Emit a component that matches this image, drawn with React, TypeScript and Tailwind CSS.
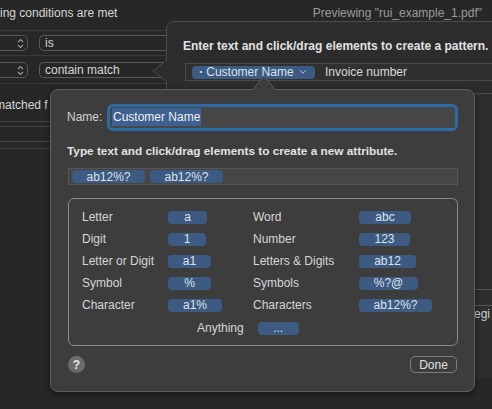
import { ChevronDown } from "lucide-react";

const LEFT_ROWS = [
  { label: "Letter", token: "a", w: "w-[39px]" },
  { label: "Digit", token: "1", w: "w-[38px]" },
  { label: "Letter or Digit", token: "a1", w: "w-[43px]" },
  { label: "Symbol", token: "%", w: "w-[43px]" },
  { label: "Character", token: "a1%", w: "w-[54px]" },
];

const RIGHT_ROWS = [
  { label: "Word", token: "abc", w: "w-[52px]" },
  { label: "Number", token: "123", w: "w-[51px]" },
  { label: "Letters & Digits", token: "ab12", w: "w-[57px]" },
  { label: "Symbols", token: "%?@", w: "w-[59px]" },
  { label: "Characters", token: "ab12%?", w: "w-[73px]" },
];

function Token({ children, w }: { children: React.ReactNode; w: string }) {
  return (
    <span
      className={`inline-flex h-[13px] items-center justify-center rounded-[4px] bg-[#3c5a82] text-[12px] leading-none text-[#dde3ea] ${w}`}
    >
      {children}
    </span>
  );
}

function UpDown() {
  return (
    <svg width="7" height="11" viewBox="0 0 7 11" className="text-[#9a9a9a]">
      <path d="M1 4 L3.5 1.5 L6 4 M1 7 L3.5 9.5 L6 7" fill="none" stroke="currentColor" strokeWidth="1.1" />
    </svg>
  );
}

export default function App() {
  return (
    <div className="relative h-[409px] w-[492px] overflow-hidden bg-[#272727] font-['Liberation_Sans',Arial,sans-serif] text-[12px] text-[#d6d6d6]">
      {/* Background window */}
      <div className="flex h-full">
        <div className="flex w-[166px] flex-col">
          <div className="flex h-[26px] items-center whitespace-nowrap">ing conditions are met</div>
          <div className="mt-[4px] border-t border-[#3a3a3a]" />
          <div className="mt-[4px] flex h-[16px] gap-[11px]">
            <div className="-ml-[10px] flex w-[38px] items-center justify-end rounded-[5px] border border-[#5a5a5a] pr-[3px]">
              <UpDown />
            </div>
            <div className="flex flex-1 items-center rounded-l-[5px] border border-r-0 border-[#5a5a5a] pl-[5px]">is</div>
          </div>
          <div className="mt-[4px] border-t border-[#3a3a3a]" />
          <div className="mt-[6px] flex h-[16px] gap-[11px]">
            <div className="-ml-[10px] flex w-[38px] items-center justify-end rounded-[5px] border border-[#5a5a5a] pr-[3px]">
              <UpDown />
            </div>
            <div className="flex flex-1 items-center rounded-l-[5px] border border-r-0 border-[#5a5a5a] pl-[5px]">contain match</div>
          </div>
          <div className="mt-[5px] border-t border-[#3a3a3a]" />
          <div className="-ml-[5px] mt-[12px] whitespace-nowrap">matched f</div>
          <div className="mt-[7px] border-t border-[#444]" />
          <div className="mt-[4px] border-t border-[#444]" />
          <div className="mt-[14px] border-t border-[#444]" />
          <div className="mt-[6px] border-t border-[#444]" />
        </div>
        <div className="flex flex-1 flex-col">
          <div className="flex h-[26px] items-center justify-end pr-[10px] text-[#9b9b9b]">
            Previewing "rui_example_1.pdf"
          </div>
          <div className="ml-auto mt-[67px] flex h-[285px] w-[20px] flex-col border-t border-[#555] bg-[#2e2e2e]">
            <div className="mt-[195px] border-t border-[#555]" />
            <div className="mt-[15px] flex h-[16px] items-center border-t border-[#555] pl-[2px] text-[#d0d0d0]">egi</div>
          </div>
        </div>
      </div>

      {/* Pattern popover */}
      <div className="absolute left-[166px] top-[21px] h-[73px] w-[340px] rounded-tl-[8px] border border-[#4c4c4c] bg-[#2c2c2c] pl-[16px] pt-[16px]">
        <svg className="absolute -left-[15px] top-[38px]" width="16" height="22" viewBox="0 0 16 22">
          <path d="M15 0 L1 11 L15 22" fill="#2c2c2c" stroke="#4c4c4c" strokeWidth="1" />
        </svg>
        <div className="whitespace-nowrap text-[12px] font-bold leading-[16px] text-[#e2e2e2]">
          Enter text and click/drag elements to create a pattern.
        </div>
        <div className="ml-[2px] mt-[9px] flex h-[18px] items-center gap-[10px] border border-[#4a4a4a] bg-[#303030] pl-[6px]">
          <span className="inline-flex h-[13px] w-[123px] items-center justify-center gap-[4px] rounded-[4px] bg-[#3c5a82] text-[#dde3ea]">
            <span className="text-[8px]">•</span>
            Customer Name
            <ChevronDown className="h-[10px] w-[10px]" strokeWidth={2} />
          </span>
          <span className="text-[#d8d8d8]">Invoice number</span>
        </div>
      </div>

      {/* Attribute popover */}
      <div className="absolute left-[50px] top-[89px] h-[303px] w-[425px] rounded-[8px] border border-[#5e5e5e] bg-[#3d3d3d] px-[16px] pt-[17px] shadow-[0_2px_6px_rgba(0,0,0,0.5)]">
        <svg className="absolute left-[201px] -top-[15px]" width="24" height="16" viewBox="0 0 24 16">
          <path d="M0 15.5 L12 1 L24 15.5" fill="#3d3d3d" stroke="#5e5e5e" strokeWidth="1" />
        </svg>
        <div className="flex h-[20px] items-center gap-[9px]">
          <span className="w-[34px] text-[#d2d2d2]">Name:</span>
          <div className="mr-[3px] flex h-[21px] flex-1 items-center rounded-[3px] bg-[#474747] pl-[2px] outline outline-[3px] outline-[#2e6aa3]">
            <span className="bg-[#3e6191] px-[1px] text-[#f0f0f0]">Customer Name</span>
          </div>
        </div>
        <div className="mt-[17px] whitespace-nowrap text-[11.8px] font-bold leading-[14px] text-[#e2e2e2]">
          Type text and click/drag elements to create a new attribute.
        </div>
        <div className="ml-[1px] mt-[10px] flex h-[17px] items-center gap-[5px] border border-[#565656] bg-[#464646] pl-[3px]">
          <Token w="w-[73px]">ab12%?</Token>
          <Token w="w-[73px]">ab12%?</Token>
        </div>
        <div className="ml-[1px] mt-[13px] h-[148px] rounded-[6px] border border-[#8a8a8a] pl-[13px] pt-[7px]">
          <div className="grid grid-cols-[86px_85px_106px_1fr]">
            {LEFT_ROWS.map((l, i) => {
              const r = RIGHT_ROWS[i];
              return [
                <div key={`ll${i}`} className="flex h-[22px] items-center">{l.label}</div>,
                <div key={`lt${i}`} className="flex h-[22px] items-center"><Token w={l.w}>{l.token}</Token></div>,
                <div key={`rl${i}`} className="flex h-[22px] items-center">{r.label}</div>,
                <div key={`rt${i}`} className="flex h-[22px] items-center"><Token w={r.w}>{r.token}</Token></div>,
              ];
            })}
          </div>
          <div className="mt-[1px] flex h-[22px] items-center">
            <span className="ml-[115px]">Anything</span>
            <span className="ml-[14px]"><Token w="w-[41px]">...</Token></span>
          </div>
        </div>
        <div className="mt-[10px] flex items-center justify-between">
          <span className="ml-[1px] flex h-[17px] w-[17px] items-center justify-center rounded-full bg-[#6b6b6b] text-[12px] font-bold text-[#e8e8e8]">?</span>
          <button className="mr-[1px] flex h-[17px] w-[47px] items-center justify-center rounded-[5px] border border-[#7c7c7c] text-[#e0e0e0]">
            Done
          </button>
        </div>
      </div>
    </div>
  );
}
